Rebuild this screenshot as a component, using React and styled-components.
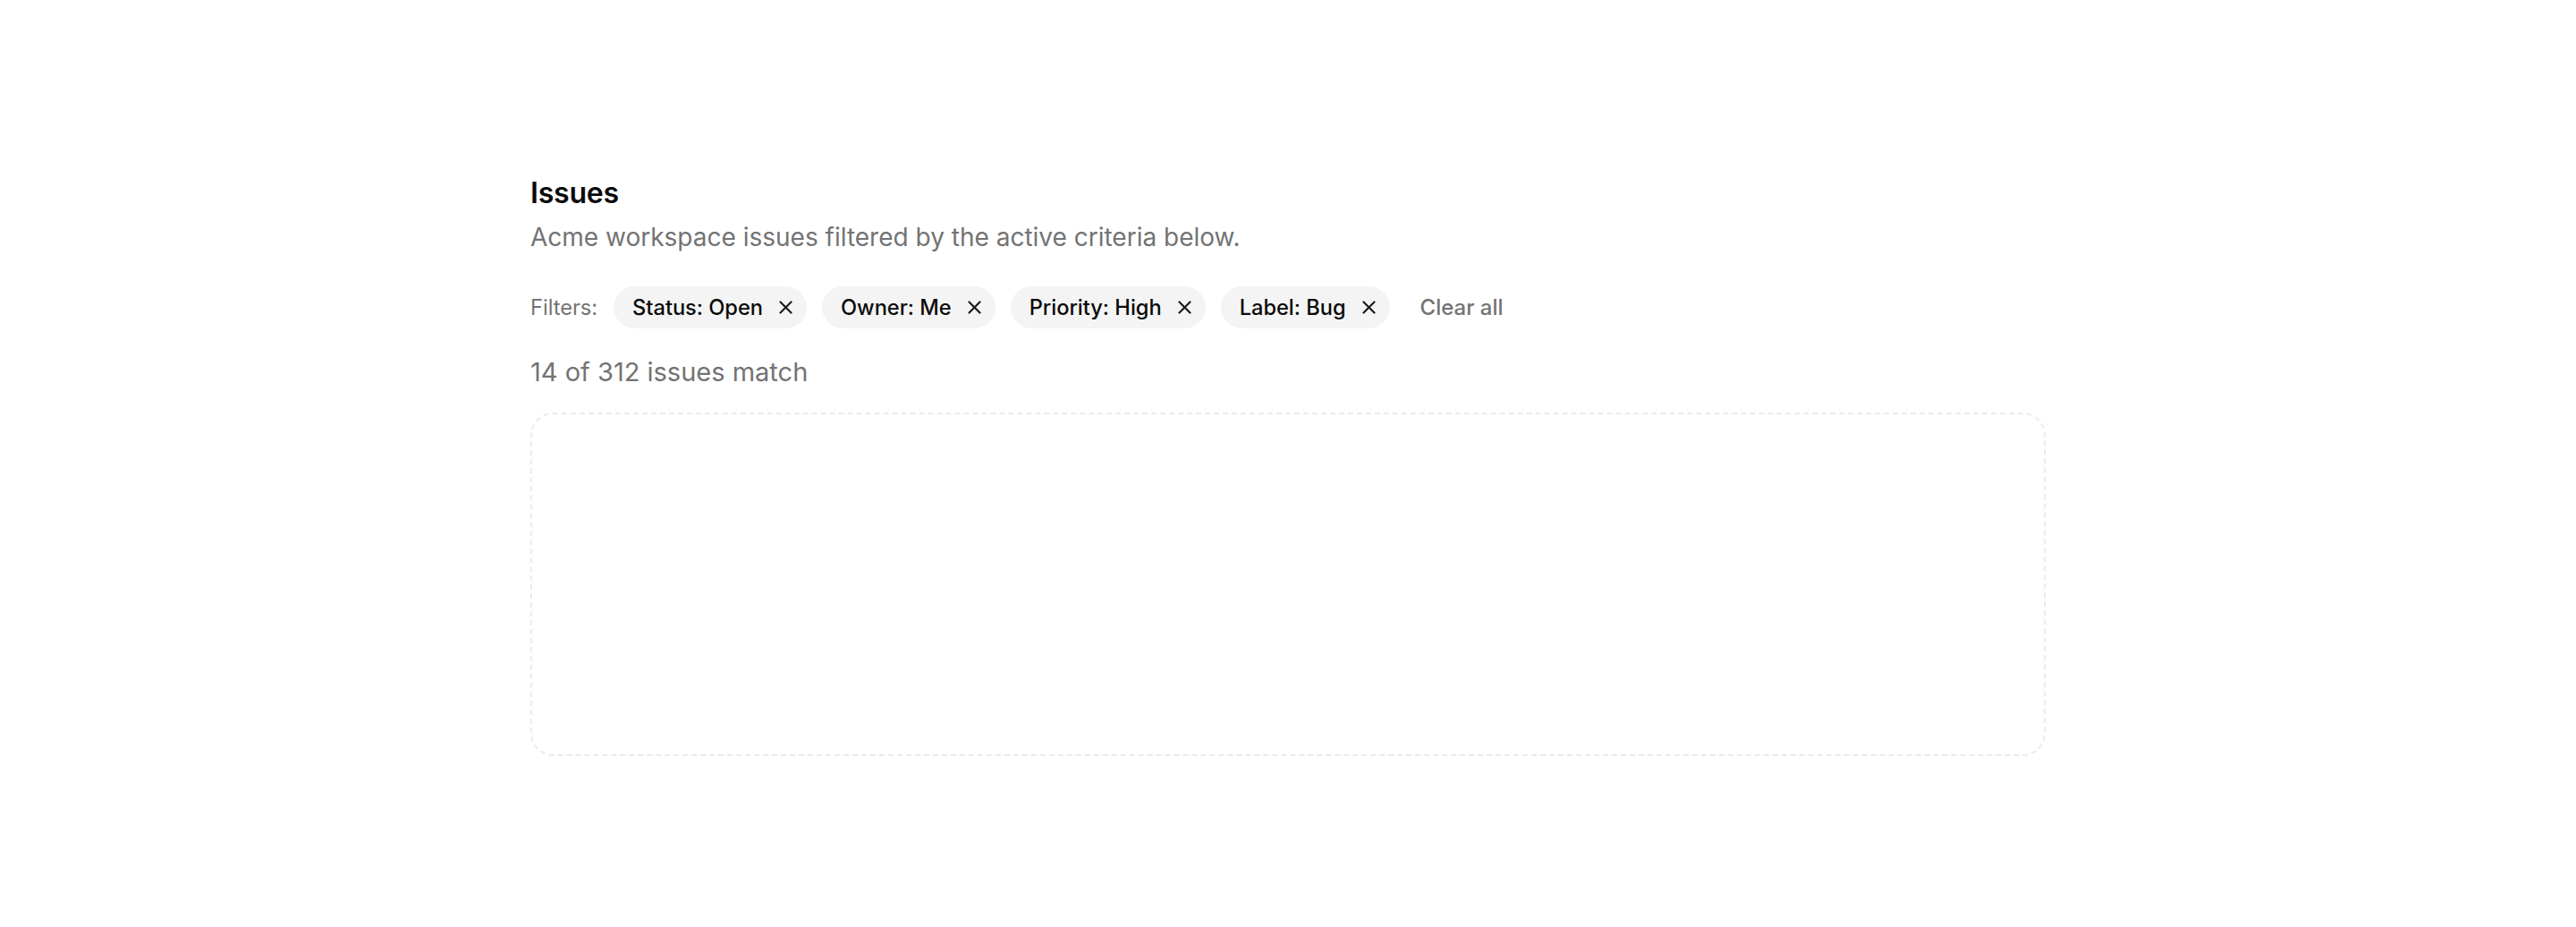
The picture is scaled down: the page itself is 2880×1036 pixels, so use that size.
import React from "react";
import styled, { createGlobalStyle } from "styled-components";

const GlobalStyle = createGlobalStyle`
  html, body { margin: 0; padding: 0; background: #ffffff; }
  body { font-family: Inter, "Noto Sans", "Liberation Sans", sans-serif; -webkit-font-smoothing: antialiased; }
  * { box-sizing: border-box; }
`;

const Page = styled.main`
  width: 1694px;
  margin: 0 auto;
  padding-top: 196px;
  display: flex;
  flex-direction: column;
`;

const Title = styled.h1`
  margin: 0;
  font-size: 32px;
  line-height: 40px;
  font-weight: 600;
  color: #0a0a0a;
  letter-spacing: -0.2px;
`;

const Subtitle = styled.p`
  margin: 8px 0 0;
  font-size: 28px;
  line-height: 42px;
  color: #737373;
`;

const FilterRow = styled.div`
  margin-top: 34px;
  display: flex;
  align-items: center;
  gap: 17px;
`;

const FilterLabel = styled.span`
  font-size: 23.6px;
  color: #737373;
  margin-right: 1px;
`;

const Chip = styled.span`
  display: inline-flex;
  align-items: center;
  gap: 18px;
  height: 47px;
  padding: 0 16px 0 21px;
  border-radius: 999px;
  background: #f4f4f4;
  font-size: 23.6px;
  font-weight: 500;
  color: #0a0a0a;
`;

const RemoveButton = styled.button`
  display: inline-flex;
  align-items: center;
  justify-content: center;
  padding: 0;
  border: 0;
  background: transparent;
  color: #1a1a1a;
  cursor: pointer;
`;

const ClearAll = styled.button`
  margin-left: 17px;
  padding: 0;
  border: 0;
  background: transparent;
  font-family: inherit;
  font-size: 24px;
  font-weight: 500;
  color: #737373;
  cursor: pointer;
`;

const Count = styled.p`
  margin: 28px 0 0;
  font-size: 29px;
  line-height: 42px;
  color: #737373;
`;

const ResultsBox = styled.section`
  margin-top: 24px;
  height: 384px;
  border: 2px dashed #ebebeb;
  border-radius: 25px;
`;

const XIcon = () => (
  <svg width="15" height="15" viewBox="0 0 15 15" fill="none" stroke="currentColor" strokeWidth="2.2" strokeLinecap="round">
    <line x1="1.5" y1="1.5" x2="13.5" y2="13.5" />
    <line x1="13.5" y1="1.5" x2="1.5" y2="13.5" />
  </svg>
);

const filters = ["Status: Open", "Owner: Me", "Priority: High", "Label: Bug"];

export default function App() {
  return (
    <>
      <GlobalStyle />
      <Page>
        <Title>Issues</Title>
        <Subtitle>Acme workspace issues filtered by the active criteria below.</Subtitle>
        <FilterRow>
          <FilterLabel>Filters:</FilterLabel>
          {filters.map((f) => (
            <Chip key={f}>
              {f}
              <RemoveButton aria-label={`Remove ${f}`}>
                <XIcon />
              </RemoveButton>
            </Chip>
          ))}
          <ClearAll>Clear all</ClearAll>
        </FilterRow>
        <Count>14 of 312 issues match</Count>
        <ResultsBox />
      </Page>
    </>
  );
}
